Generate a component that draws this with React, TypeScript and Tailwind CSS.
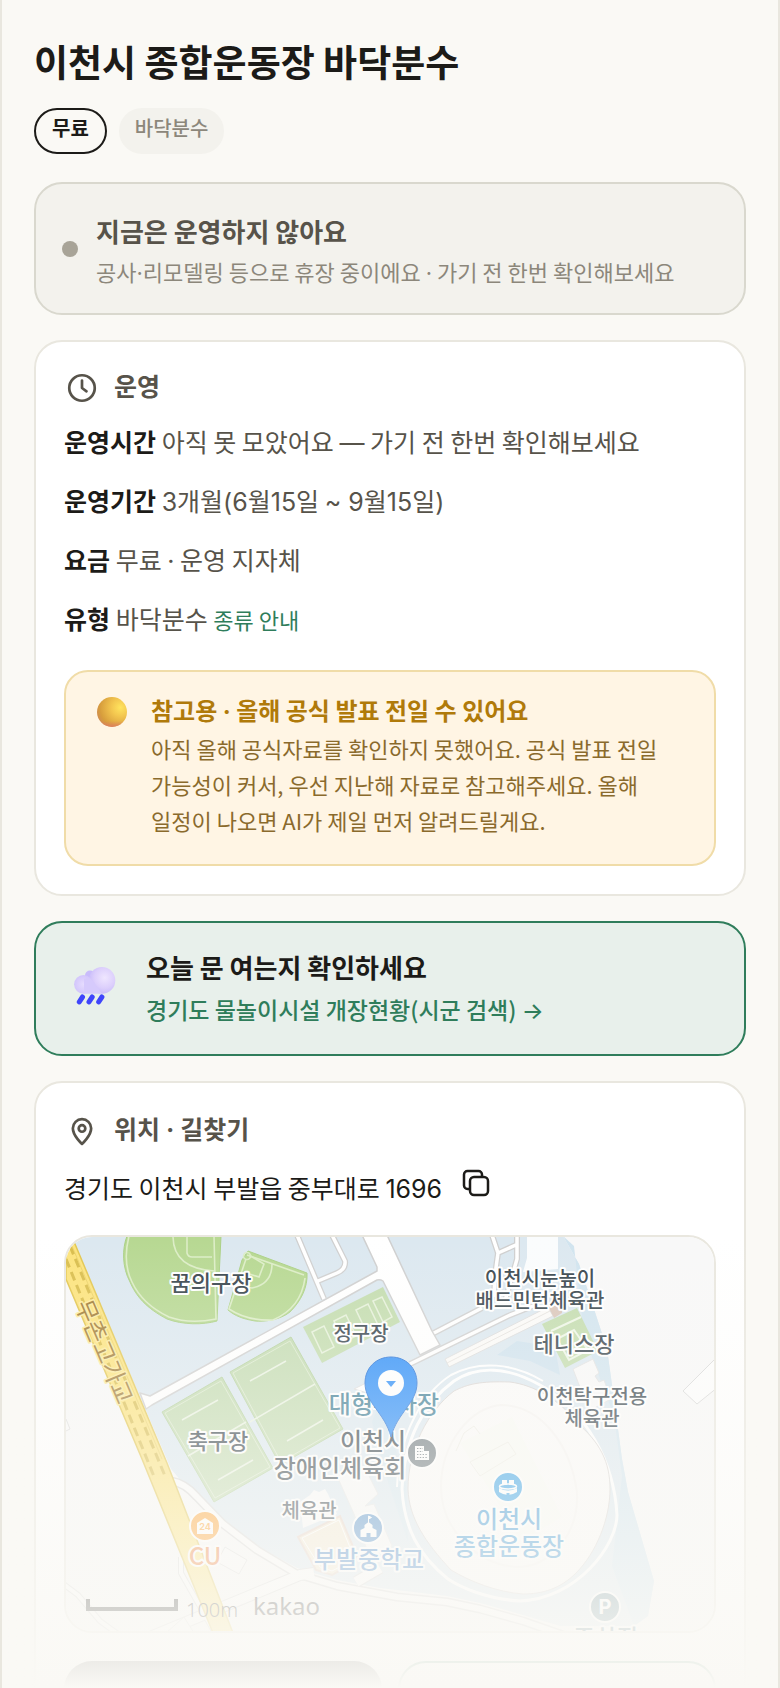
import type { ReactNode } from 'react';

function ClockIcon() {
  return (
    <svg width="36" height="36" viewBox="0 0 24 24" fill="none" stroke="currentColor" strokeWidth="1.8" strokeLinecap="round" strokeLinejoin="round" aria-hidden="true">
      <circle cx="12" cy="12" r="8.5" />
      <path d="M12 7v5l3 2.2" />
    </svg>
  );
}

function PinIcon() {
  return (
    <svg width="36" height="36" viewBox="0 0 24 24" fill="none" stroke="currentColor" strokeWidth="1.8" strokeLinecap="round" strokeLinejoin="round" aria-hidden="true">
      <path d="M12 20.6s6.1-5.4 6.1-10.4a6.1 6.1 0 0 0-12.2 0c0 5 6.1 10.4 6.1 10.4z" />
      <circle cx="12" cy="10.3" r="2.2" />
    </svg>
  );
}

function CopyIcon() {
  return (
    <svg width="28" height="28" viewBox="0 0 28 28" fill="none" stroke="currentColor" strokeWidth="2.5" strokeLinecap="round" strokeLinejoin="round" aria-hidden="true">
      <rect x="8" y="8" width="18" height="18" rx="4" />
      <path d="M7.5 20H5.5A3.5 3.5 0 0 1 2 16.5V5.5A3.5 3.5 0 0 1 5.5 2H16.5A3.5 3.5 0 0 1 20 5.5V7.5" />
    </svg>
  );
}

function BallIcon() {
  return (
    <svg width="32" height="32" viewBox="0 0 32 32" aria-hidden="true">
      <defs>
        <radialGradient id="ball" cx="0.78" cy="0.35" r="0.85">
          <stop offset="0" stopColor="#ffe45e" />
          <stop offset="0.35" stopColor="#f3c64f" />
          <stop offset="0.8" stopColor="#d79d3c" />
          <stop offset="1" stopColor="#cf8a52" />
        </radialGradient>
        <linearGradient id="ballGlow" x1="0" y1="0" x2="0" y2="1">
          <stop offset="0.8" stopColor="#e07868" stopOpacity="0" />
          <stop offset="1" stopColor="#e07868" stopOpacity="0.8" />
        </linearGradient>
      </defs>
      <circle cx="16" cy="16" r="15" fill="url(#ball)" />
      <circle cx="16" cy="16" r="15" fill="url(#ballGlow)" />
    </svg>
  );
}

function RainCloudIcon() {
  return (
    <svg width="60" height="60" viewBox="0 0 60 60" aria-hidden="true">
      <defs>
        <radialGradient id="cloudBig" cx="0.6" cy="0.4" r="0.65">
          <stop offset="0" stopColor="#efe6ff" />
          <stop offset="0.6" stopColor="#dccffc" />
          <stop offset="1" stopColor="#c6b9fa" />
        </radialGradient>
        <radialGradient id="cloudSmall" cx="0.5" cy="0.5" r="0.6">
          <stop offset="0" stopColor="#e6dcfe" />
          <stop offset="0.6" stopColor="#d8ccfc" />
          <stop offset="1" stopColor="#cdc0fb" />
        </radialGradient>
      </defs>
      <circle cx="26" cy="16.5" r="5" fill="#c9bcfb" />
      <circle cx="38" cy="21.4" r="13.3" fill="url(#cloudBig)" />
      <circle cx="19.5" cy="25.3" r="9.4" fill="url(#cloudSmall)" />
      <path d="M20 20q6-3 9 2 4 6 9 12.7H20z" fill="#d6cafc" />
      <g stroke="#3f45fb" strokeWidth="5" strokeLinecap="round">
        <path d="M18.5 38l-3.2 4.8" />
        <path d="M28.2 38l-3.2 4.8" />
        <path d="M37.9 38l-3.2 4.8" />
      </g>
    </svg>
  );
}

function MapView() {
  return (
    <svg className="block w-full" viewBox="0 0 648 394" preserveAspectRatio="xMidYMid slice" role="img" aria-label="지도">
      <rect width="648" height="394" fill="#f8f8f8" />

      {/* campus ground */}
      <path d="M-1-1H497l16 28 14 42 14 43 6 43 9 67 6 33 26 89-6 35-14 10H494l-37-11-43-12-33-7-67-8-43-8-40-12-40-22-34-26-40-37-12-14L5-1z" fill="#dce8f0" />
      <path d="M497-1l16 28 14 42 14 43 6 43 9 67 6 33 26 89-6 35-14 10-22-60 10-90-8-60-30-80-10-90z" fill="#d1e4ef" />
      <path d="M431 118l20-14 38 6 5 28-30-14z" fill="#cfe2ee" />
      <path d="M314 165l-8 20 16 60 20 60-2-60z" fill="#d1e4ef" opacity="0.6" />

      {/* ball parks */}
      <g fill="#b7d892" stroke="#abd085">
        <path d="M61-1C56 12 56 30 64 45c6 14 16 26 37 37 16 6 36 6 50 2L155-1z" />
        <path d="M182 14l59 22c1 14-6 28-17 39-10 8-26 10-35 9-12-2-20-5-27-11l14-50z" />
      </g>
      <g fill="none" stroke="#dcedc6" strokeWidth="1.6">
        <path d="M63-1c-4 16-4 32 3 46 6 13 16 25 37 35 14 5 32 5 47 2L148-1" />
        <path d="M107-1c0 20 12 33 41 35M121-1v17q1 4 5 4h20" />
        <path d="M181 18l57 20M180 22l-17 50q18 12 44 11 28-12 32-42" />
        <path d="M183 18l15 9-5 13-13-4M206 27q0 20-20 24l-14-2" />
        <circle cx="181" cy="19" r="3.5" />
      </g>

      {/* narrow paths */}
      <g fill="none" strokeLinejoin="round">
        <g stroke="#cfcfcf" strokeWidth="6">
          <path d="M231-2l27 64M266-2l13 26q1 8-8 12l-19 8" />
          <path d="M426-2l6 18-3 22-1 22M451-2v24l-12 42M432 16l20-9" />
          <path d="M344 127l98-48 30-12M366 97l50-26" />
        </g>
        <g stroke="#fff" strokeWidth="3.5">
          <path d="M231-2l27 64M266-2l13 26q1 8-8 12l-19 8" />
          <path d="M426-2l6 18-3 22-1 22M451-2v24l-12 42M432 16l20-9" />
          <path d="M344 127l98-48 30-12M366 97l50-26" />
        </g>
      </g>

      {/* main streets */}
      <g fill="#fff" stroke="#cfcfcf" strokeWidth="1.5" strokeLinejoin="round">
        <path d="M74 156l10 3L311 34V30L296-2h25l45 96 8 14-20 10-37-74q-3-2-6-1L86 168l-6 4z" />
      </g>

      {/* courts and pitches */}
      <path d="M237 90l80-40 17 35-78 41z" fill="#c3dcae" />
      <g fill="none" stroke="#e6f1da" strokeWidth="1.5">
        <path d="M246 95l12-6 10 21-12 6zM268 84l12-6 10 21-12 6zM290 73l12-6 10 21-12 6zM307 64l9-4 10 20-9 5z" />
      </g>
      <path d="M96 175l60-35 51 91-59 34zM164 135l61-35 52 92-63 36z" fill="#c3dbb1" stroke="#b5d19f" />
      <path d="M99 176l56-32 49 86-55 31zM167 136l57-32 50 87-59 34z" fill="none" stroke="#dcebcf" />
      <path d="M116 183l36-20M184 144l36-20M184 185l65-38M221 204l36-21M122 219l58-34M152 243l35-20" stroke="#eaf3e2" strokeWidth="1.5" />

      {/* stands and halls */}
      <path d="M461-1h31v33l-35 3 4-14z" fill="#fafcfd" />
      <path d="M379 122l103-52 5 9-104 51z" fill="#fbfaf8" stroke="#ddd" />
      <path d="M381 126l103-52" stroke="#e6e3df" />
      <path d="M482 69h14v7l-8 5z" fill="#dac6ba" />
      <path d="M476 87l35-16 21 43-33 17z" fill="#c3dcae" />
      <path d="M485 94l30-14M491 102l17-9 14 20-19 10z" fill="none" stroke="#eef6e6" strokeWidth="2" />
      <path d="M507 132l20-10 6 14-4 3 4 6 5-2 7 19-22 12z" fill="#f8f8f8" stroke="#e2e2e2" />
      <path d="M617 154l40-40v32l-26 21z" fill="#fdfdfd" stroke="#d8d8d8" />
      <path d="M234 265l10-7 4-5 5 2 6-3 3 5 9 20-34 14z" fill="#fafafa" />
      <path d="M271 239l28-8 13 26-13 12 9-2 18 42-22 12-16-44z" fill="#f8f8f8" stroke="#e6e6e6" />
      <path d="M232 300l42-21 17 40-9 10-16 9-16-5z" fill="#f4ead4" stroke="#e6d2c6" strokeWidth="2" />
      <path d="M236 301l37-18 14 35-6 8-15 8-12-4z" fill="none" stroke="#fff" />
      <path d="M288 152l20-10v16z" fill="#fff" stroke="#ddd" />

      {/* stadium */}
      <path d="M336 252c2-50 22-86 52-108 24-16 54-14 86 4 46 26 74 76 77 130 0 30-40 84-97 86-34-2-60-14-72-22-30-24-44-52-46-90z" fill="none" stroke="#fff" strokeWidth="3" />
      <path d="M331 250c2-54 26-94 54-112 28-15 62-12 92 6" fill="none" stroke="#fff" strokeWidth="2" />
      <path d="M342 252c0-40 20-78 46-98 14-7 26-10 56-9 24 3 50 18 66 40 24 20 34 40 34 67 0 30-14 64-34 84-16 16-34 21-53 21-26-2-52-12-72-24-26-28-42-52-43-81z" fill="#fbfaf9" stroke="#d9d5d3" />
      <path d="M375 250c0-44 30-80 60-82 40 0 70 40 76 88 2 40-26 74-60 74-40-2-76-38-76-80z" fill="none" stroke="#f6f4f2" strokeWidth="2" />
      <path d="M394 206l52-26 50 100-40 24z" fill="#f9faf5" />
      <path d="M390 214l8-18 10-7 6 8M404 225l38-20 8 12-36 22z" fill="none" stroke="#efeee6" />

      {/* lower streets */}
      <g fill="none" strokeLinejoin="round">
        <g stroke="#d9d9d9">
          <path d="M105 244q14 2 26 16l26 27 34 26 40 24 40 12 60 11 50 5 33 7 43 12 40 14" strokeWidth="9" />
          <path d="M84 400l150-62 14-2M290 345l24-14" strokeWidth="12" />
          <path d="M115 320v16l34 60M-4 346l16 12 22 26 22 16" strokeWidth="6" />
        </g>
        <g stroke="#fcfcfc">
          <path d="M105 244q14 2 26 16l26 27 34 26 40 24 40 12 60 11 50 5 33 7 43 12 40 14" strokeWidth="6" />
          <path d="M84 400l150-62 14-2M290 345l24-14" strokeWidth="10" />
          <path d="M115 320v16l34 60M-4 346l16 12 22 26 22 16" strokeWidth="4" />
        </g>
      </g>
      <path d="M159 310l22 13-8 14-22-12zM100 396l18-16 10 16M0 182l4 10-4 2" fill="#fafafa" stroke="#ddd" />

      {/* overpass */}
      <path d="M0-6L9 7l92 219 66 170h-20L76 222 0 42z" fill="#fce37c" stroke="#e2c650" strokeWidth="1.5" />
      <path d="M3 2l93 220" stroke="#ecd36a" />
      <path d="M0 22l89 220M4 9l95 230" stroke="#d9bd4c" strokeWidth="3" strokeDasharray="9 5" />

      {/* point markers */}
      <g stroke="#fff" strokeWidth="2">
        <circle cx="356" cy="216" r="15" fill="#6f7a80" />
        <circle cx="442" cy="250" r="15" fill="#36a1e6" />
        <circle cx="139" cy="289" r="15" fill="#ffa12e" />
        <circle cx="302" cy="291" r="15" fill="#528fca" />
        <circle cx="539" cy="370" r="15" fill="#6f929c" />
      </g>
      <path d="M349 209h9v5h5v9h-14z" fill="#fff" />
      <path d="M351 211.5h6M351 214.5h6M351 217.5h11M351 220.5h11" stroke="#6f7a80" strokeWidth="1.2" strokeDasharray="1.4 1.4" />
      <path d="M433 251v4q9 6 18 0v-4q-9 5-18 0z" fill="#fff" />
      <ellipse cx="442" cy="249.5" rx="8.5" ry="2.5" fill="none" stroke="#fff" strokeWidth="1.5" />
      <path d="M436 243h5v5h-5zM443 243h5v5h-5z" fill="#fff" />
      <path d="M440.5 259v-3h3v3z" fill="#36a1e6" />
      <path d="M131 297v-11l8-5 8 5v11z" fill="#fff" />
      <path d="M294.5 300v-7l4-2v-3l4-3 4 3v3l4 2v7h-6v-4h-4v4z" fill="#fff" />
      <path d="M302.5 286v-4l3-1.5-3-1.5z" fill="#fff" stroke="#fff" />

      <g fontFamily="'Noto Sans CJK KR', sans-serif" fontWeight="500" textAnchor="middle" stroke="#fff" strokeWidth="4" strokeLinejoin="round" paintOrder="stroke">
        <text x="40" y="114" fontSize="24" fontWeight="400" fill="#a17c35" stroke="#fdeb9e" strokeWidth="3" dominantBaseline="central" transform="rotate(67 40 114)">무촌고가교</text>
        <g fontSize="22" fill="#37444c">
          <text x="145" y="54">꿈의구장</text>
          <text x="152" y="212">축구장</text>
          <text x="508" y="115">테니스장</text>
        </g>
        <g fontSize="20" fill="#37444c">
          <text x="295" y="104">정구장</text>
          <text x="474" y="49">이천시눈높이</text>
          <text x="474" y="71">배드민턴체육관</text>
          <text x="526" y="167">이천탁구전용</text>
          <text x="526" y="189">체육관</text>
          <text x="243" y="281">체육관</text>
        </g>
        <g fontSize="24">
          <text x="318" y="176" fill="#3f7e96">대형주차장</text>
          <text x="307" y="213" fill="#37444c">이천시</text>
          <text x="274" y="240" fill="#37444c">장애인체육회</text>
          <text x="443" y="291" fill="#3793d2">이천시</text>
          <text x="443" y="318" fill="#3793d2">종합운동장</text>
          <text x="303" y="331" fill="#4585c8">부발중학교</text>
          <text x="540" y="410" fill="#5b808b">주차장</text>
          <text x="139" y="328" fill="#ee7c33">CU</text>
        </g>
      </g>
      <g fontFamily="Inter, sans-serif" textAnchor="middle" fontWeight="700">
        <text x="139" y="293" fontSize="9" fill="#ffa12e">24</text>
        <text x="539" y="377" fontSize="20" fill="#fff">P</text>
      </g>

      {/* scale */}
      <path d="M22 362v10h88v-10" fill="none" stroke="#222" strokeWidth="4" />
      <text x="120" y="380" fontSize="20" fill="#333" fontFamily="'Noto Sans', sans-serif" fontWeight="300">100m</text>
      <text x="187" y="378" fontSize="24" fill="#333" fontFamily="'Noto Sans', sans-serif">kakao</text>

      {/* current place */}
      <path d="M325 120c15 0 26 11 26 26 0 20-20 30-26 54-6-24-26-34-26-54 0-15 11-26 26-26z" fill="#2a8df9" stroke="#2170d8" />
      <circle cx="325" cy="146" r="13" fill="#fff" />
      <path d="M320 144h10l-5 6z" fill="#2a8df9" />
    </svg>
  );
}

// digits and symbols are set in Inter, hangul in Noto
function Latin({ children }: { children: ReactNode }) {
  return <span className="font-[Inter,sans-serif] leading-none">{children}</span>;
}

function SectionTitle({ icon, children }: { icon: ReactNode; children: ReactNode }) {
  return (
    <h2 className="flex h-10 items-center gap-[14px] font-[Inter,'Noto_Sans_CJK_KR',sans-serif] text-[25px] font-bold text-[#57534a]">
      {icon}
      <span>{children}</span>
    </h2>
  );
}

function InfoRow({ label, children }: { label: string; children: ReactNode }) {
  return (
    <p>
      <strong className="font-bold text-[#1c1b18]">{label}</strong> {children}
    </p>
  );
}

export default function App() {
  return (
    <div className="relative max-h-screen overflow-hidden border-x-2 border-[#e9e7df] bg-[#faf9f5] px-8 pt-9 font-['Noto_Sans_CJK_KR',sans-serif] break-keep text-[#1c1b18]">
      <header>
        <h1 className="text-[37px] leading-[50px] font-bold">이천시 종합운동장 바닥분수</h1>
        <div className="mt-[22px] flex gap-3 text-xl leading-6">
          <span className="rounded-full border-2 border-[#1c1b18] px-4 pt-[6px] pb-3 font-bold">무료</span>
          <span className="rounded-full border-2 border-[#f3f2ed] bg-[#f3f2ed] px-[14px] pt-[6px] pb-3 font-medium text-[#8c877b]">바닥분수</span>
        </div>
      </header>

      <main className="mt-7 flex flex-col gap-[25px]">
        <section className="flex items-center gap-[18px] rounded-[28px] border-2 border-[#d9d8ce] bg-[#f3f2ed] px-[26px]">
          <span className="size-4 shrink-0 rounded-full bg-[#a8a498]" />
          <div className="pt-[29px] pb-[26px]">
            <p className="text-[26px] leading-9 font-bold text-[#57534a]">지금은 운영하지 않아요</p>
            <p className="mt-[6px] text-[22px] leading-8 text-[#8c877b]">
              공사<Latin>·</Latin>리모델링 등으로 휴장 중이에요 <Latin>·</Latin> 가기 전 한번 확인해보세요
            </p>
          </div>
        </section>

        <section className="rounded-[28px] border-2 border-[#e9e7df] bg-white px-7 pt-[26px] pb-7">
          <SectionTitle icon={<ClockIcon />}>운영</SectionTitle>
          <div className="mt-[13px] flex flex-col gap-[19px] text-[25px] leading-10 text-[#57534a]">
            <InfoRow label="운영시간">
              아직 못 모았어요 <Latin>—</Latin> 가기 전 한번 확인해보세요
            </InfoRow>
            <InfoRow label="운영기간">
              <Latin>3</Latin>개월<Latin>(6</Latin>월<Latin>15</Latin>일 <Latin>~ 9</Latin>월<Latin>15</Latin>일<Latin>)</Latin>
            </InfoRow>
            <InfoRow label="요금">
              무료 <Latin>·</Latin> 운영 지자체
            </InfoRow>
            <InfoRow label="유형">
              바닥분수 <a href="#types" className="text-[22px] leading-none text-[#2f7d5b]">종류 안내</a>
            </InfoRow>
          </div>

          <div className="mt-8 flex gap-[23px] rounded-[24px] border-2 border-[#f0dca8] bg-[#fff5e4] px-[30px] pt-[18px] pb-[26px]">
            <div className="shrink-0 pt-[6px]">
              <BallIcon />
            </div>
            <div>
              <p className="text-2xl leading-10 font-bold text-[#b07a0a]">
                참고용 <Latin>·</Latin> 올해 공식 발표 전일 수 있어요
              </p>
              <p className="text-[22px] leading-9 text-[#8a6a2c]">
                아직 올해 공식자료를 확인하지 못했어요. 공식 발표 전일 가능성이 커서, 우선 지난해 자료로 참고해주세요. 올해 일정이 나오면 AI가 제일 먼저 알려드릴게요.
              </p>
            </div>
          </div>
        </section>

        <a href="#status" className="flex items-center gap-[22px] rounded-[28px] border-2 border-[#2f7d5b] bg-[#e8f0eb] px-7 py-[27px]">
          <RainCloudIcon />
          <span className="flex flex-col gap-[7px]">
            <span className="text-[26px] leading-[34px] font-bold">오늘 문 여는지 확인하세요</span>
            <span className="text-[23px] leading-9 font-medium text-[#2f7d5b]">
              경기도 물놀이시설 개장현황(시군 검색) <Latin>→</Latin>
            </span>
          </span>
        </a>

        <section className="rounded-[28px] border-2 border-[#e9e7df] bg-white px-7 pt-7 pb-7">
          <SectionTitle icon={<PinIcon />}>위치 · 길찾기</SectionTitle>
          <div className="mt-4 flex items-center gap-5">
            <p className="text-[25px] leading-10">
              경기도 이천시 부발읍 중부대로 <Latin>1696</Latin>
            </p>
            <button type="button" aria-label="주소 복사" className="pb-2">
              <CopyIcon />
            </button>
          </div>
          <div className="mt-7 overflow-hidden rounded-[28px] border-2 border-[#e9e7df]">
            <MapView />
          </div>
          <div className="mt-7 grid grid-cols-2 gap-4">
            <button type="button" aria-label="길찾기" className="h-24 rounded-[28px] bg-[#1c1b18]" />
            <button type="button" aria-label="지도 보기" className="h-24 rounded-[28px] border-2 border-[#2f7d5b] bg-white" />
          </div>
        </section>
      </main>

      {/* fade towards the fold */}
      <div className="pointer-events-none absolute -inset-x-[2px] bottom-0 h-[450px] bg-linear-to-b from-[#faf9f5]/0 to-[#faf9f5]" />
    </div>
  );
}
